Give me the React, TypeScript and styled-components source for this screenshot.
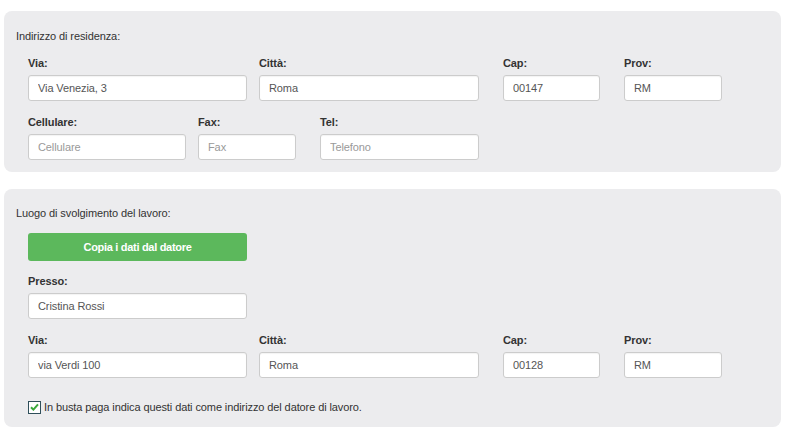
import React from 'react'
import styled, { createGlobalStyle } from 'styled-components';

const GlobalStyle = createGlobalStyle`
body{
    margin:0;
    background:#ffffff;
    font-family: "Liberation Sans", Arial, sans-serif;
    font-size: 11px;
    letter-spacing: -0.1px;
    color:#333333;
}
`;

const Page = styled.div`
padding: 11px 7px 0 4px;
display:flex;
flex-direction: column;
gap: 17px;
`;

const Panel = styled.section<{ $top: number; $bottom: number }>`
background:#ececee;
border-radius: 8px;
padding: ${p => p.$top}px 12px ${p => p.$bottom}px 12px;
`;

const PanelTitle = styled.div`
line-height: 14px;
margin-bottom: 13px;
`;

const Body = styled.div`
padding-left: 12px;
display:flex;
flex-direction: column;
`;

const Row = styled.div<{ $gapAfter?: number }>`
display:flex;
margin-bottom: ${p => p.$gapAfter ?? 0}px;
`;

const Field = styled.div<{ $width: number; $space?: number }>`
width: ${p => p.$width}px;
margin-right: ${p => p.$space ?? 0}px;
display:flex;
flex-direction: column;
`;

const Label = styled.label`
font-weight: bold;
line-height: 14px;
margin-bottom: 5px;
color:#333333;
`;

const Input = styled.input`
box-sizing: border-box;
width:100%;
height: 26px;
border: 1px solid #cccccc;
border-radius: 3px;
background:#ffffff;
padding: 0 9px;
font-family: "Liberation Sans", Arial, sans-serif;
font-size: 11px;
letter-spacing: -0.1px;
color:#555555;
box-shadow: inset 0 1px 1px rgba(0,0,0,0.05);
outline:none;
&::placeholder{
    color:#999999;
}
`;

const CopyButton = styled.button`
box-sizing: border-box;
width: 219px;
height: 28px;
border:none;
border-radius: 3px;
background:#5cb85c;
color:#ffffff;
font-family: "Liberation Sans", Arial, sans-serif;
font-size: 11px;
font-weight: bold;
letter-spacing: -0.3px;
margin-bottom: 13px;
cursor:pointer;
`;

const CheckRow = styled.label`
display:flex;
align-items:center;
gap: 3px;
margin-top: 22px;
line-height: 14px;
color:#333333;
`;

const Box = styled.span`
box-sizing: border-box;
width: 13px;
height: 13px;
border: 1px solid #2f4f5a;
background:#ffffff;
display:inline-flex;
align-items:center;
justify-content:center;
`;

type FieldDef = { label: string; width: number; space?: number; value?: string; placeholder?: string };

const FieldRow = ({ fields, gapAfter }: { fields: FieldDef[]; gapAfter?: number }) => (
    <Row $gapAfter={gapAfter}>
        {fields.map(f => (
            <Field key={f.label} $width={f.width} $space={f.space}>
                <Label>{f.label}</Label>
                <Input defaultValue={f.value} placeholder={f.placeholder} />
            </Field>
        ))}
    </Row>
);

export default function App() {
    return (
        <>
            <GlobalStyle />
            <Page>
                <Panel $top={18} $bottom={12}>
                    <PanelTitle>Indirizzo di residenza:</PanelTitle>
                    <Body>
                        <FieldRow
                            gapAfter={14}
                            fields={[
                                { label: 'Via:', width: 219, space: 12, value: 'Via Venezia, 3' },
                                { label: 'Città:', width: 220, space: 24, value: 'Roma' },
                                { label: 'Cap:', width: 97, space: 24, value: '00147' },
                                { label: 'Prov:', width: 98, value: 'RM' },
                            ]}
                        />
                        <FieldRow
                            fields={[
                                { label: 'Cellulare:', width: 158, space: 12, placeholder: 'Cellulare' },
                                { label: 'Fax:', width: 98, space: 24, placeholder: 'Fax' },
                                { label: 'Tel:', width: 159, placeholder: 'Telefono' },
                            ]}
                        />
                    </Body>
                </Panel>

                <Panel $top={17} $bottom={13}>
                    <PanelTitle>Luogo di svolgimento del lavoro:</PanelTitle>
                    <Body>
                        <CopyButton>Copia i dati dal datore</CopyButton>
                        <FieldRow
                            gapAfter={14}
                            fields={[{ label: 'Presso:', width: 219, value: 'Cristina Rossi' }]}
                        />
                        <FieldRow
                            fields={[
                                { label: 'Via:', width: 219, space: 12, value: 'via Verdi 100' },
                                { label: 'Città:', width: 220, space: 24, value: 'Roma' },
                                { label: 'Cap:', width: 97, space: 24, value: '00128' },
                                { label: 'Prov:', width: 98, value: 'RM' },
                            ]}
                        />
                        <CheckRow>
                            <Box>
                                <svg width="9" height="8" viewBox="0 0 9 8">
                                    <path d="M1 4.2 L3.4 6.6 L8 1.4" fill="none" stroke="#3aa83a" strokeWidth="2" />
                                </svg>
                            </Box>
                            In busta paga indica questi dati come indirizzo del datore di lavoro.
                        </CheckRow>
                    </Body>
                </Panel>
            </Page>
        </>
    );
}
